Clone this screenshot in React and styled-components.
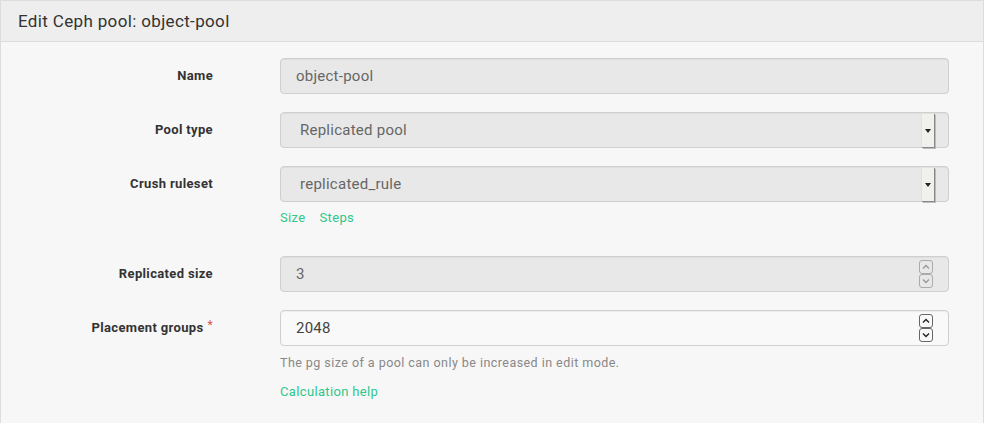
import React from 'react';
import styled, { createGlobalStyle } from 'styled-components';

const GlobalStyle = createGlobalStyle`
  body {
    margin: 0;
    background: #fff;
    font-family: Roboto, "Liberation Sans", Arial, sans-serif;
    letter-spacing: 0.35px;
  }
`;

const Panel = styled.div`
  width: 984px;
  height: 423px;
  border: 1px solid #ddd;
  border-bottom: none;
  background: #f7f7f7;
  box-sizing: border-box;
`;

const PanelHeader = styled.div`
  height: 40px;
  background: #eeeeee;
  border-bottom: 1px solid #dcdcdc;
  display: flex;
  align-items: center;
  padding-left: 17px;
  font-size: 17px;
  color: #333;
`;

const Body = styled.div`
  padding-top: 16px;
  display: flex;
  flex-direction: column;
`;

const Row = styled.div`
  display: grid;
  grid-template-columns: 212px 669px;
  column-gap: 67px;
  margin-bottom: ${(p) => p.$gap || 18}px;
`;

const Label = styled.label`
  height: 36px;
  display: flex;
  align-items: center;
  justify-content: flex-end;
  font-size: 13px;
  font-weight: bold;
  color: #333;
  padding-bottom: 2px;
  box-sizing: border-box;
`;

const Required = styled.span`
  color: #d9534f;
  font-weight: normal;
  margin-left: 4px;
  font-size: 12px;
  position: relative;
  top: -2px;
`;

const Field = styled.div`
  display: flex;
  flex-direction: column;
`;

const Input = styled.div`
  height: 36px;
  box-sizing: border-box;
  border: 1px solid #cfcfcf;
  border-radius: 4px;
  background: ${(p) => (p.$disabled ? '#e8e8e8' : '#f9f9f9')};
  box-shadow: inset 0 1px 1px rgba(0, 0, 0, 0.05);
  display: flex;
  align-items: center;
  justify-content: space-between;
  padding-left: ${(p) => p.$pad || 15}px;
  padding-right: ${(p) => p.$right || 15}px;
  font-size: 15px;
  letter-spacing: 0.25px;
  color: ${(p) => (p.$disabled ? '#666' : '#444')};
`;

const SelectArrow = styled.div`
  width: 12px;
  height: 33px;
  background: #f0f0ec;
  border-top: 1px solid #e2e2e2;
  border-left: 1px solid #e2e2e2;
  box-shadow: 1px 1px 0 #888, 2px 2px 0 #bbb;
  display: flex;
  align-items: center;
  justify-content: center;
  margin-right: -1px;

  &::after {
    content: '';
    border-left: 3px solid transparent;
    border-right: 3px solid transparent;
    border-top: 4px solid #222;
  }
`;

const Spinner = styled.div`
  display: flex;
  flex-direction: column;
`;

const SpinBtn = styled.div`
  width: 12px;
  height: 12px;
  border: 1px solid ${(p) => (p.$disabled ? '#aaa' : '#666')};
  border-radius: 3px;
  display: flex;
  align-items: center;
  justify-content: center;
  color: ${(p) => (p.$disabled ? '#999' : '#222')};
`;

const Links = styled.div`
  display: flex;
  gap: 14px;
  margin-top: ${(p) => p.$top || 8}px;
`;

const Link = styled.a`
  font-size: 13px;
  color: #2fc78c;
  text-decoration: none;
  cursor: pointer;
`;

const Help = styled.div`
  font-size: 12.5px;
  letter-spacing: 0.45px;
  color: #888;
  margin-top: 9px;
`;

const Chevron = ({ up }) => (
  <svg width="8" height="6" viewBox="0 0 8 6">
    <path
      d={up ? 'M1 4.5 L4 1.5 L7 4.5' : 'M1 1.5 L4 4.5 L7 1.5'}
      fill="none"
      stroke="currentColor"
      strokeWidth="1.4"
    />
  </svg>
);

function NumberSpin({ disabled }) {
  return (
    <Spinner>
      <SpinBtn $disabled={disabled}><Chevron up /></SpinBtn>
      <SpinBtn $disabled={disabled}><Chevron /></SpinBtn>
    </Spinner>
  );
}

export default function App() {
  return (
    <>
      <GlobalStyle />
      <Panel>
        <PanelHeader>Edit Ceph pool: object-pool</PanelHeader>
        <Body>
          <Row>
            <Label>Name</Label>
            <Input $disabled>object-pool</Input>
          </Row>
          <Row>
            <Label>Pool type</Label>
            <Input $disabled $pad={19} $right={0}>
              Replicated pool
              <SelectArrow />
            </Input>
          </Row>
          <Row $gap={31}>
            <Label>Crush ruleset</Label>
            <Field>
              <Input $disabled $pad={19} $right={0}>
                replicated_rule
                <SelectArrow />
              </Input>
              <Links>
                <Link>Size</Link>
                <Link>Steps</Link>
              </Links>
            </Field>
          </Row>
          <Row>
            <Label>Replicated size</Label>
            <Input $disabled>
              3
              <NumberSpin disabled />
            </Input>
          </Row>
          <Row>
            <Label>
              Placement groups<Required>*</Required>
            </Label>
            <Field>
              <Input>
                2048
                <NumberSpin />
              </Input>
              <Help>The pg size of a pool can only be increased in edit mode.</Help>
              <Links $top={14}>
                <Link>Calculation help</Link>
              </Links>
            </Field>
          </Row>
        </Body>
      </Panel>
    </>
  );
}
